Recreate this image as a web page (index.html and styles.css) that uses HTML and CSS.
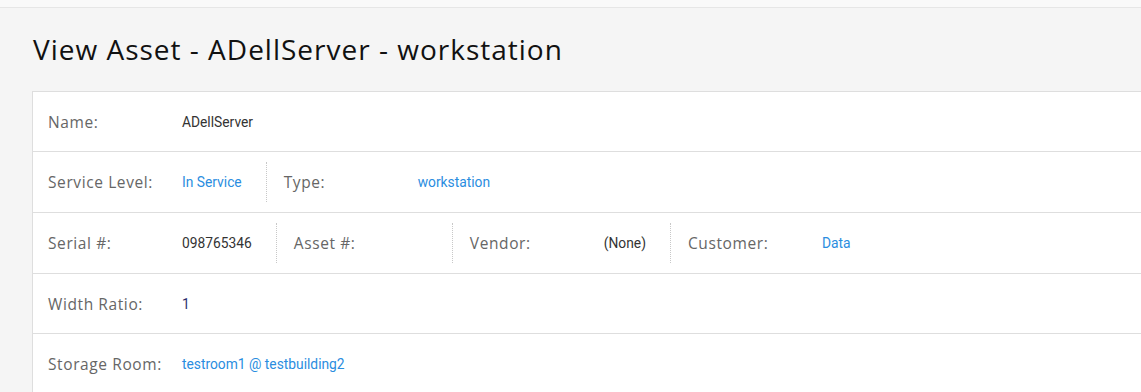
FILE: index.html
```html
<!DOCTYPE html>
<html lang="en">
  <head>
    <meta charset="UTF-8" />
    <meta name="viewport" content="width=device-width, initial-scale=1.0" />
    <title>View Asset</title>
    <link rel="stylesheet" href="styles.css">
  </head>

  <body>
    <div class="top-bar"></div>

    <main class="content">
      <h1 class="page-title">View Asset - ADellServer - workstation</h1>

      <div class="card">
        <div class="row">
          <div class="cell">
            <span class="label">Name:</span>
            <span class="value">ADellServer</span>
          </div>
        </div>

        <div class="row">
          <div class="cell">
            <span class="label">Service Level:</span>
            <a class="value link" href="#">In Service</a>
          </div>
          <div class="cell">
            <span class="label">Type:</span>
            <a class="value link" href="#">workstation</a>
          </div>
        </div>

        <div class="row">
          <div class="cell">
            <span class="label">Serial #:</span>
            <span class="value">098765346</span>
          </div>
          <div class="cell">
            <span class="label">Asset #:</span>
            <span class="value"></span>
          </div>
          <div class="cell">
            <span class="label">Vendor:</span>
            <span class="value">(None)</span>
          </div>
          <div class="cell">
            <span class="label">Customer:</span>
            <a class="value link" href="#">Data</a>
          </div>
        </div>

        <div class="row">
          <div class="cell">
            <span class="label">Width Ratio:</span>
            <span class="value number">1</span>
          </div>
        </div>

        <div class="row">
          <div class="cell">
            <span class="label">Storage Room:</span>
            <a class="value link" href="#">testroom1 @ testbuilding2</a>
          </div>
        </div>
      </div>
    </main>
  </body>
</html>
```

FILE: styles.css
```css
body {
  margin: 0;
  font-family: "Open Sans", Arial, sans-serif;
  background-color: #f5f5f5;
  overflow: hidden;
}

.top-bar {
  height: 7px;
  background-color: #f9f9f9;
  border-bottom: 1px solid #e6e6e6;
}

.content {
  padding-left: 32px;
}

.page-title {
  margin: 24px 0 25px 1px;
  font-size: 28px;
  font-weight: 400;
  line-height: 34px;
  letter-spacing: 1px;
  color: #111;
}

.card {
  background-color: #fff;
  border: 1px solid #dedede;
  border-right: none;
  border-bottom: none;
}

.row {
  display: flex;
  align-items: stretch;
  height: 59px;
  border-bottom: 1px solid #dedede;
}

.row:nth-child(2),
.row:nth-child(3) {
  height: 60px;
}

.cell {
  display: flex;
  align-items: center;
  margin: 10px 0;
  padding: 0 24px 0 17px;
}

.cell:first-child {
  padding-left: 15px;
}

.cell + .cell {
  border-left: 1px dotted #c8c8c8;
}

.label {
  width: 134px;
  flex-shrink: 0;
  font-size: 15.5px;
  color: #666;
  letter-spacing: 0.6px;
}

.value {
  font-family: Roboto, Arial, sans-serif;
  font-size: 13.8px;
  color: #333;
}

.link {
  color: #2a8de0;
  text-decoration: none;
}

.number {
  color: #2c2c6a;
}
```
